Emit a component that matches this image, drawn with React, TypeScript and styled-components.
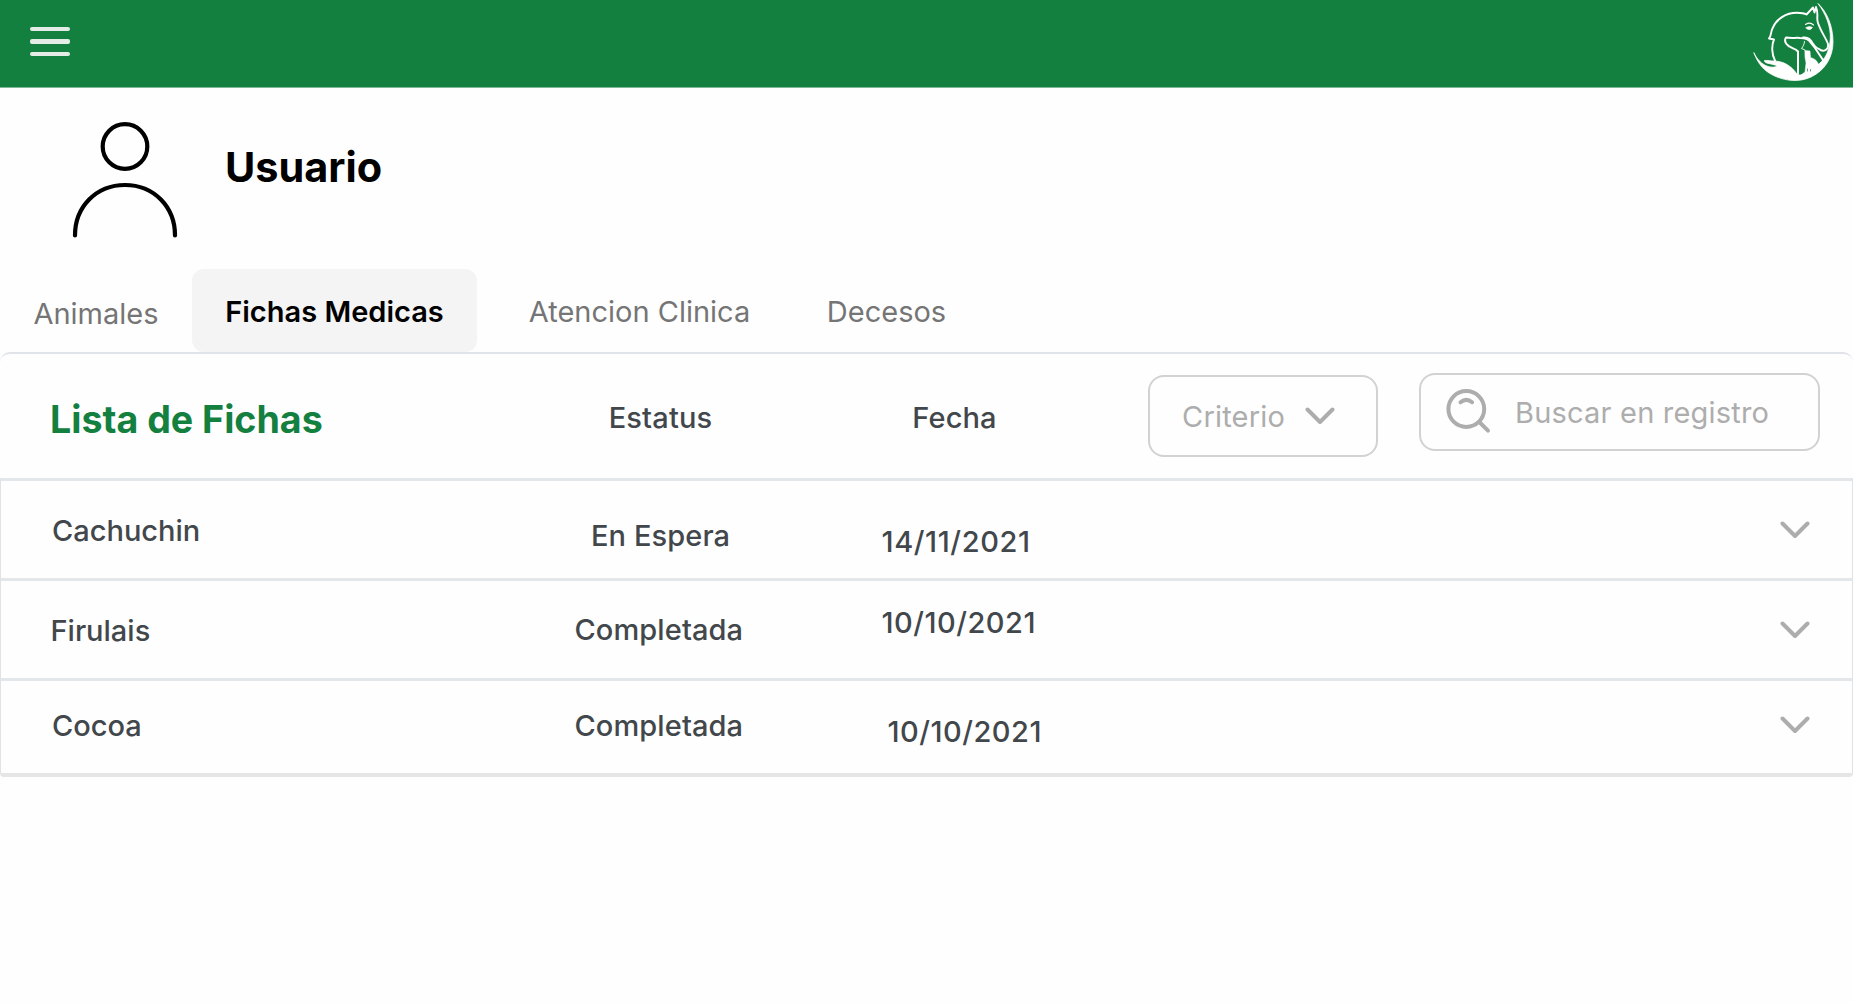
import React from "react";
import styled, { createGlobalStyle } from "styled-components";

const Global = createGlobalStyle`
  * { box-sizing: border-box; }
  body { margin: 0; background: #fff; font-family: Inter, "Liberation Sans", sans-serif; }
  button, input { font-family: inherit; }
`;

const Page = styled.div`
  width: 1853px;
  height: 1003px;
  overflow: hidden;
  background: #fefefe;
`;

const TopBar = styled.header`
  display: flex;
  justify-content: space-between;
  align-items: flex-start;
  height: 88px;
  border-bottom: 1px solid #7fb897;
  background: #148040;
`;

const MenuButton = styled.button`
  display: flex;
  flex-direction: column;
  gap: 8.2px;
  margin: 27px 0 0 30px;
  padding: 0;
  border: 0;
  background: none;
`;

const MenuLine = styled.span`
  width: 40px;
  height: 4.3px;
  border-radius: 2px;
  background: #e3ece6;
`;

const Logo = styled.svg`
  width: 110px;
  height: 87px;
`;

const Profile = styled.section`
  display: flex;
  align-items: flex-start;
  height: 181px;
  padding: 32.5px 0 0 72px;
`;

const Avatar = styled.svg`
  width: 106px;
  height: 118px;
`;

const UserName = styled.h1`
  margin: 21.3px 0 0 47px;
  font-size: 41.4px;
  line-height: 50px;
  font-weight: 700;
  color: #000;
`;

const Tabs = styled.nav`
  display: flex;
  height: 83px;
`;

const Tab = styled.button<{ $width: number; $active?: boolean; $shift?: number }>`
  width: ${(p) => p.$width}px;
  height: 83px;
  padding: ${(p) => 1 + (p.$shift ?? 0)}px 0 0;
  border: 0;
  border-radius: 12px;
  background: ${(p) => (p.$active ? "#f4f4f4" : "transparent")};
  color: ${(p) => (p.$active ? "#000" : "#757575")};
  font-size: 29px;
  font-weight: ${(p) => (p.$active ? 600 : 400)};
  white-space: nowrap;
`;

const Panel = styled.section`
  border-top: 2px solid #e0e3e7;
  border-radius: 10px 10px 0 0;
`;

const PanelHead = styled.div`
  display: flex;
  align-items: flex-start;
  height: 124px;
`;

const Title = styled.h2`
  width: 558px;
  margin: 0;
  padding: 43px 0 0 50px;
  font-size: 37.6px;
  line-height: 46px;
  font-weight: 700;
  color: #148040;
`;

const Heading = styled.div<{ $width: number }>`
  width: ${(p) => p.$width}px;
  padding-top: 45.5px;
  text-align: center;
  font-size: 29px;
  line-height: 36px;
  font-weight: 500;
  letter-spacing: 0.15px;
  color: #42474c;
`;

const Select = styled.button`
  display: flex;
  align-items: center;
  gap: 20px;
  width: 230px;
  height: 82px;
  margin: 21px 0 0 2px;
  padding: 0 0 0 32px;
  border: 2px solid #d2d2d2;
  border-radius: 16px;
  background: transparent;
  color: #adadad;
  font-size: 29px;
  letter-spacing: 0.2px;
`;

const SelectLabel = styled.span`
  padding-top: 1px;
`;

const SearchBox = styled.label`
  display: flex;
  align-items: center;
  gap: 24px;
  width: 401px;
  height: 77.5px;
  margin: 19px 0 0 41px;
  padding-left: 24px;
  border: 2px solid #d2d2d2;
  border-radius: 16px;
`;

const SearchInput = styled.input`
  width: 280px;
  padding: 2px 0 0;
  border: 0;
  outline: 0;
  background: transparent;
  font-size: 29px;
  letter-spacing: 0.2px;
  color: #42474c;
  &::placeholder { color: #adadad; opacity: 1; }
`;

const Rows = styled.div`
  border: 1px solid #dfe2e6;
  border-top: 0;
  border-bottom: 4px solid #e6e6e6;
  border-radius: 0 0 4px 4px;
`;

const Row = styled.div<{ $height: number }>`
  display: flex;
  align-items: flex-start;
  height: ${(p) => p.$height}px;
  border-top: 3px solid #e4e7ea;
`;

const Cell = styled.div<{ $width: number; $top: number; $left?: number; $tracking?: number }>`
  width: ${(p) => p.$width}px;
  padding: ${(p) => p.$top}px 0 0 ${(p) => p.$left ?? 0}px;
  font-size: 29px;
  line-height: 36px;
  font-weight: 500;
  letter-spacing: ${(p) => p.$tracking ?? 0}px;
  color: #42474c;
  white-space: nowrap;
`;

const Chevron = styled.svg`
  width: 30px;
  height: 18px;
  fill: none;
  stroke: #adadad;
  stroke-width: 4;
  stroke-linecap: round;
  stroke-linejoin: round;
`;

const Expand = styled.button<{ $top: number }>`
  display: flex;
  margin: ${(p) => p.$top}px 0 0 auto;
  padding: 0 42px 0 0;
  border: 0;
  background: none;
`;

const Down = () => (
  <Chevron viewBox="0 0 30 18"><path d="M2.5 2.5 15 15 27.5 2.5" /></Chevron>
);

const HorseLogo = () => (
  <Logo viewBox="0 0 110 87" fill="none" stroke="#fff" strokeLinecap="round" strokeLinejoin="round">
    <path d="M11 53C14 61 18 67 24 71.500C35 79.500 53 84 68 77C82 70.500 90 57 90 42C90 26 84 12 75 3.500C83 14 88 27 87.300 39C86.500 50 83 57 78.500 61.500L73 67L68 75H54.500C49 66 40 61 31 61C28 61 24 60.200 21.500 60.500C21 62 23 63 26 63.500L34 65.500C33 67.500 29 67.500 25 66.500C18 64 14 59 11 53Z" fill="#fff" strokeWidth="0.8" />
    <path d="M32 60.500C28.500 54 28.500 45 31 39.500L26 38.500C28.500 36 27.500 32 29.500 28.500C33 19 43 12.800 54 12.800C58 12.800 61 13 63.500 14.500L70 7.500L71.500 12.500L73 7C76 14 73 18 75 23C78 32 83 38 85 44C86 50 80 52.500 76 49C73 48 71.500 46 69.500 43C67 38 63 37 60 37.500" strokeWidth="1.900" />
    <path d="M55 74V51.500C52 48 46 48 43.500 44C42 42 42 39 43 37.500C48 38.500 53 37.500 57 38C62 38 66 39 68 43L72 48L81 61.500" strokeWidth="2" />
    <path d="M61.500 41.500C61.500 44 60 46.500 58.500 48.500L62 50" strokeWidth="0.9" />
    <path d="M62.500 24.500Q67 21.500 70.500 25" strokeWidth="1.100" />
    <path d="M63 27.500Q67 25.500 69.500 27.500Q67.500 31 64 29Z" fill="#fff" strokeWidth="0.6" />
    <path d="M62 50.500L67 51L67.500 57.500C73 59 76 63 76 67L71 75H58L62 72L63 63L62 57Z" fill="#fff" strokeWidth="0.5" />
    <path d="M64.500 71V69M67.500 71V69.500" stroke="#148040" strokeWidth="0.7" />
  </Logo>
);

const records = [
  { name: "Cachuchin", status: "En Espera", date: "14/11/2021", height: 100, nameAt: [51, 31.5], statusAt: [590, 37], dateAt: [880.5, 43.4], tracking: 0.6, chevron: 39.5 },
  { name: "Firulais", status: "Completada", date: "10/10/2021", height: 100, nameAt: [49.5, 31.5], statusAt: [573.5, 31], dateAt: [880.5, 24.4], tracking: 0.5, chevron: 39.5 },
  { name: "Cocoa", status: "Completada", date: "10/10/2021", height: 95, nameAt: [51, 27], statusAt: [573.5, 27], dateAt: [886.5, 32.5], tracking: 0.5, chevron: 34.5 },
];

export default function App() {
  return (
    <Page>
      <Global />
      <TopBar>
        <MenuButton aria-label="Menu"><MenuLine /><MenuLine /><MenuLine /></MenuButton>
        <HorseLogo />
      </TopBar>
      <Profile>
        <Avatar viewBox="0 0 106 118" fill="none" stroke="#000" strokeWidth="4.200" strokeLinecap="round">
          <circle cx="53" cy="25.500" r="22.300" />
          <path d="M3 114.500C3 86 24 64 53 64S103 86 103 114.500" />
        </Avatar>
        <UserName>Usuario</UserName>
      </Profile>
      <Tabs>
        <Tab $width={192} $shift={4}>Animales</Tab>
        <Tab $width={285} $active>Fichas Medicas</Tab>
        <Tab $width={325}>Atencion Clinica</Tab>
        <Tab $width={169}>Decesos</Tab>
      </Tabs>
      <Panel>
        <PanelHead>
          <Title>Lista de Fichas</Title>
          <Heading $width={205}>Estatus</Heading>
          <Heading $width={383}>Fecha</Heading>
          <Select><SelectLabel>Criterio</SelectLabel><Down /></Select>
          <SearchBox>
            <svg width="46" height="46" viewBox="0 0 46 46" fill="none" stroke="#adadad" strokeWidth="4" strokeLinecap="round">
              <circle cx="21.300" cy="20" r="17.900" />
              <path d="M34.300 33 43 41.600M15.500 13.200Q21.300 8.500 27.100 13.200" />
            </svg>
            <SearchInput placeholder="Buscar en registro" />
          </SearchBox>
        </PanelHead>
        <Rows>
          {records.map((r) => (
            <Row key={r.name} $height={r.height}>
              <Cell $width={r.statusAt[0]} $left={r.nameAt[0]} $top={r.nameAt[1]}>{r.name}</Cell>
              <Cell $width={r.dateAt[0] - r.statusAt[0]} $top={r.statusAt[1]} $tracking={0.1}>{r.status}</Cell>
              <Cell $width={200} $top={r.dateAt[1]} $tracking={r.tracking}>{r.date}</Cell>
              <Expand $top={r.chevron} aria-label={r.name}><Down /></Expand>
            </Row>
          ))}
        </Rows>
      </Panel>
    </Page>
  );
}
